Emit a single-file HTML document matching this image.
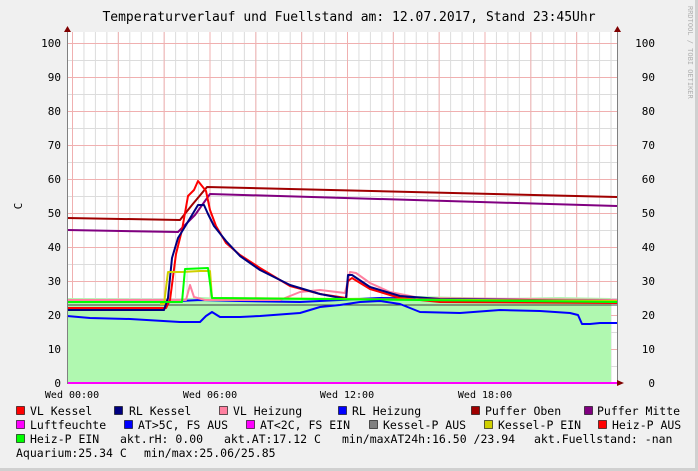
<!DOCTYPE html>
<html><head><meta charset="utf-8"><style>
html,body{margin:0;padding:0;background:#f0f0f0;}
svg{display:block;font-family:"DejaVu Sans Mono","Liberation Mono",monospace;}
</style></head><body>
<svg width="698" height="471" viewBox="0 0 698 471" xmlns="http://www.w3.org/2000/svg">
<defs>
<pattern id="vg" x="72" y="0" width="11.458" height="471" patternUnits="userSpaceOnUse"><line x1="0.5" y1="0" x2="0.5" y2="471" stroke="#dcdcdc" stroke-width="1"/></pattern>
<pattern id="vr" x="72" y="0" width="45.833" height="471" patternUnits="userSpaceOnUse"><line x1="0.5" y1="0" x2="0.5" y2="471" stroke="#f0b0b0" stroke-width="1"/></pattern>
<pattern id="hg" x="0" y="43" width="698" height="17" patternUnits="userSpaceOnUse"><line x1="0" y1="0.5" x2="698" y2="0.5" stroke="#dcdcdc"/></pattern>
<pattern id="hr" x="0" y="43" width="698" height="34" patternUnits="userSpaceOnUse"><line x1="0" y1="0.5" x2="698" y2="0.5" stroke="#f0b0b0"/></pattern>
</defs>
<rect x="0" y="0" width="698" height="471" fill="#d0d0d0"/>
<rect x="0" y="0" width="695" height="468" fill="#f0f0f0"/>
<rect x="67" y="32" width="550" height="351" fill="#fff"/>
<rect x="67" y="32" width="550" height="351" fill="url(#vg)"/>
<rect x="67" y="32" width="550" height="351" fill="url(#hg)"/>
<rect x="67" y="32" width="550" height="351" fill="url(#vr)"/>
<rect x="67" y="32" width="550" height="351" fill="url(#hr)"/>
<path d="M67,383 L67,298 L180,299 L200,297 L260,299 L340,298 L420,296 L500,298 L560,297 L611,298 L611,383 Z" fill="#b0f8b0"/>
<g fill="none" stroke-width="2" stroke-linejoin="round">
<polyline stroke="#0000ff" points="67,301 180,301 200,300 240,301 300,302 380,298 450,299 520,300 617,300"/>
<polyline stroke="#404040" points="67,305 617,305" stroke-width="1"/>
<polyline stroke="#a00000" points="67,218 180,220 192,205 207,187 617,197"/>
<polyline stroke="#800080" points="67,230 178,232 195,215 210,194 617,206"/>
<polyline stroke="#ff80a0" points="67,300 186,300 190,285 194,297 205,300 280,300 300,292 320,290 345,293 350,272 356,273 370,283 390,292 420,298 617,300"/>
<polyline stroke="#ff0000" points="67,308 166,308 170,300 176,254 182,230 188,196 194,190 198,181 202,186 206,191 210,210 216,226 226,243 240,255 260,268 290,286 320,294 346,298 348,281 352,278 370,289 400,298 440,302 617,303"/>
<polyline stroke="#000080" points="67,310 164,310 168,298 172,258 178,238 186,225 192,215 198,205 204,205 208,214 214,226 226,241 240,256 260,270 290,285 320,294 346,299 348,275 352,275 370,287 400,296 440,299 617,301"/>
<polyline stroke="#d0d000" points="160,304 164,304 168,272 182,272 200,271 210,271 212,298 617,301"/>
<polyline stroke="#00ff00" points="67,302 182,302 185,269 208,268 212,298 617,302"/>
<polyline stroke="#0000ff" points="67,316 90,318 130,319 180,322 200,322 206,316 212,312 220,317 240,317 260,316 300,313 320,307 340,305 360,302 380,301 400,304 420,312 460,313 500,310 540,311 570,313 578,315 582,324 590,324 600,323 617,323"/>
</g>
<line x1="67" y1="383" x2="617" y2="383" stroke="#ff00ff" stroke-width="2"/>
<line x1="67.5" y1="28" x2="67.5" y2="384" stroke="#808080"/>
<line x1="617.5" y1="28" x2="617.5" y2="384" stroke="#808080"/>
<polygon points="64,32 71,32 67.5,26" fill="#800000"/>
<polygon points="614,32 621,32 617.5,26" fill="#800000"/>
<polygon points="617,380 617,386 624,383" fill="#800000"/>
<g font-size="11" fill="#000">
<text x="349" y="21" font-size="13" text-anchor="middle">Temperaturverlauf und Fuellstand am: 12.07.2017, Stand 23:45Uhr</text>
<g text-anchor="end">
<text x="61" y="47">100</text><text x="61" y="81">90</text><text x="61" y="115">80</text><text x="61" y="149">70</text><text x="61" y="183">60</text><text x="61" y="217">50</text><text x="61" y="251">40</text><text x="61" y="285">30</text><text x="61" y="319">20</text><text x="61" y="353">10</text><text x="61" y="387">0</text>
</g>
<g text-anchor="end">
<text x="655" y="47">100</text><text x="655" y="81">90</text><text x="655" y="115">80</text><text x="655" y="149">70</text><text x="655" y="183">60</text><text x="655" y="217">50</text><text x="655" y="251">40</text><text x="655" y="285">30</text><text x="655" y="319">20</text><text x="655" y="353">10</text><text x="655" y="387">0</text>
</g>
<text x="18" y="210" transform="rotate(-90 18 206)" text-anchor="middle">C</text>
<g font-size="10" text-anchor="middle">
<text x="72" y="398">Wed 00:00</text><text x="210" y="398">Wed 06:00</text><text x="347" y="398">Wed 12:00</text><text x="485" y="398">Wed 18:00</text>
</g>
<text x="688" y="6" font-size="7" fill="#b0b0b0" transform="rotate(90 688 6)">RRDTOOL / TOBI OETIKER</text>
<g stroke="#000" stroke-width="0.6">
<rect x="16.5" y="406.5" width="8" height="8" fill="#ff0000"/>
<rect x="114.5" y="406.5" width="8" height="8" fill="#000080"/>
<rect x="219.5" y="406.5" width="8" height="8" fill="#ff80a0"/>
<rect x="338.5" y="406.5" width="8" height="8" fill="#0000ff"/>
<rect x="471.5" y="406.5" width="8" height="8" fill="#a00000"/>
<rect x="584.5" y="406.5" width="8" height="8" fill="#800080"/>
<rect x="16.5" y="420.5" width="8" height="8" fill="#ff00ff"/>
<rect x="124.5" y="420.5" width="8" height="8" fill="#0000ff"/>
<rect x="246.5" y="420.5" width="8" height="8" fill="#ff00ff"/>
<rect x="369.5" y="420.5" width="8" height="8" fill="#808080"/>
<rect x="484.5" y="420.5" width="8" height="8" fill="#d0d000"/>
<rect x="598.5" y="420.5" width="8" height="8" fill="#ff0000"/>
<rect x="16.5" y="434.5" width="8" height="8" fill="#00ff00"/>
</g>
<g font-size="11.5">
<text x="30" y="415">VL Kessel</text>
<text x="129" y="415">RL Kessel</text>
<text x="233" y="415">VL Heizung</text>
<text x="352" y="415">RL Heizung</text>
<text x="485" y="415">Puffer Oben</text>
<text x="597" y="415">Puffer Mitte</text>
<text x="30" y="429">Luftfeuchte</text>
<text x="138" y="429">AT&gt;5C, FS AUS</text>
<text x="260" y="429">AT&lt;2C, FS EIN</text>
<text x="383" y="429">Kessel-P AUS</text>
<text x="498" y="429">Kessel-P EIN</text>
<text x="612" y="429">Heiz-P AUS</text>
<text x="30" y="443">Heiz-P EIN</text>
<text x="120" y="443">akt.rH: 0.00</text>
<text x="224" y="443">akt.AT:17.12 C</text>
<text x="342" y="443">min/maxAT24h:16.50 /23.94</text>
<text x="534" y="443">akt.Fuellstand: -nan</text>
<text x="16" y="457">Aquarium:25.34 C</text>
<text x="144" y="457">min/max:25.06/25.85</text>
</g>
</g>
</svg>
</body></html>
